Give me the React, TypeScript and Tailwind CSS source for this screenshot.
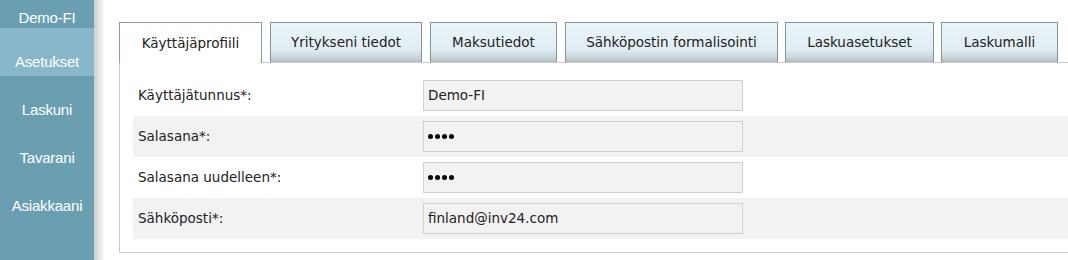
import React from "react";

const tabs = [
  { label: "Käyttäjäprofiili", w: "w-[143px]", ml: "ml-0", active: true },
  { label: "Yritykseni tiedot", w: "w-[152px]", ml: "ml-[8px]", active: false },
  { label: "Maksutiedot", w: "w-[127px]", ml: "ml-[8px]", active: false },
  { label: "Sähköpostin formalisointi", w: "w-[213px]", ml: "ml-[8px]", active: false },
  { label: "Laskuasetukset", w: "w-[149px]", ml: "ml-[7px]", active: false },
  { label: "Laskumalli", w: "w-[117px]", ml: "ml-[7px]", active: false },
];

const nav = ["Asetukset", "Laskuni", "Tavarani", "Asiakkaani"];

function Dots() {
  return (
    <div className="flex gap-[2px]">
      <span className="block w-[5px] h-[5px] rounded-full bg-black" />
      <span className="block w-[5px] h-[5px] rounded-full bg-black" />
      <span className="block w-[5px] h-[5px] rounded-full bg-black" />
      <span className="block w-[5px] h-[5px] rounded-full bg-black" />
    </div>
  );
}

const rows: { label: string; value?: string; password?: boolean }[] = [
  { label: "Käyttäjätunnus*:", value: "Demo-FI" },
  { label: "Salasana*:", password: true },
  { label: "Salasana uudelleen*:", password: true },
  { label: "Sähköposti*:", value: "finland@inv24.com" },
];

export default function App() {
  return (
    <div className="flex w-[1068px] h-[260px] overflow-hidden bg-white">
      <div className="w-[94px] shrink-0 bg-[#6a9fb2] text-white text-center font-['Liberation_Sans',Arial,sans-serif] text-[15px] tracking-[-0.2px] leading-[18px]">
        <div className="h-[28px] pt-[9px]">Demo-FI</div>
        {nav.map((n, i) => (
          <div
            key={n}
            className={`h-[48px] pt-[25px] ${i === 0 ? "bg-[#88b7c9]" : ""}`}
          >
            {n}
          </div>
        ))}
      </div>
      <div className="w-[11px] shrink-0 bg-gradient-to-r from-[#cfcfcf] to-white" />
      <div className="ml-[14px] pt-[22px] font-['DejaVu_Sans',Tahoma,sans-serif] text-[13.5px] text-[#222]">
        <div className="flex h-[40px] items-stretch">
          {tabs.map((t) => (
            <div
              key={t.label}
              className={`${t.w} ${t.ml} shrink-0 flex items-center justify-center border border-b-0 ${
                t.active
                  ? "relative z-10 -mb-px h-[41px] bg-white border-[#8a9ca3]"
                  : "h-[40px] border-[#7f959d] bg-[linear-gradient(to_bottom,#ebf5fa_0%,#e2eef4_65%,#c9d6dc_88%,#aebcc2_100%)]"
              }`}
            >
              {t.label}
            </div>
          ))}
        </div>
        <div className="w-[1000px] border border-r-0 border-[#cccccc] pt-[12px] pl-[13px] pb-[13px]">
          {rows.map((r, i) => (
            <div
              key={r.label}
              className={`h-[41px] flex items-center ${i % 2 === 1 ? "bg-[#f2f2f2]" : ""}`}
            >
              <div className="w-[290px] shrink-0 pl-[5px]">{r.label}</div>
              <div className="w-[320px] h-[31px] shrink-0 border border-[#cfcfcf] bg-[#f2f2f2] flex items-center pl-[4px]">
                {r.password ? <Dots /> : r.value}
              </div>
            </div>
          ))}
        </div>
      </div>
    </div>
  );
}
